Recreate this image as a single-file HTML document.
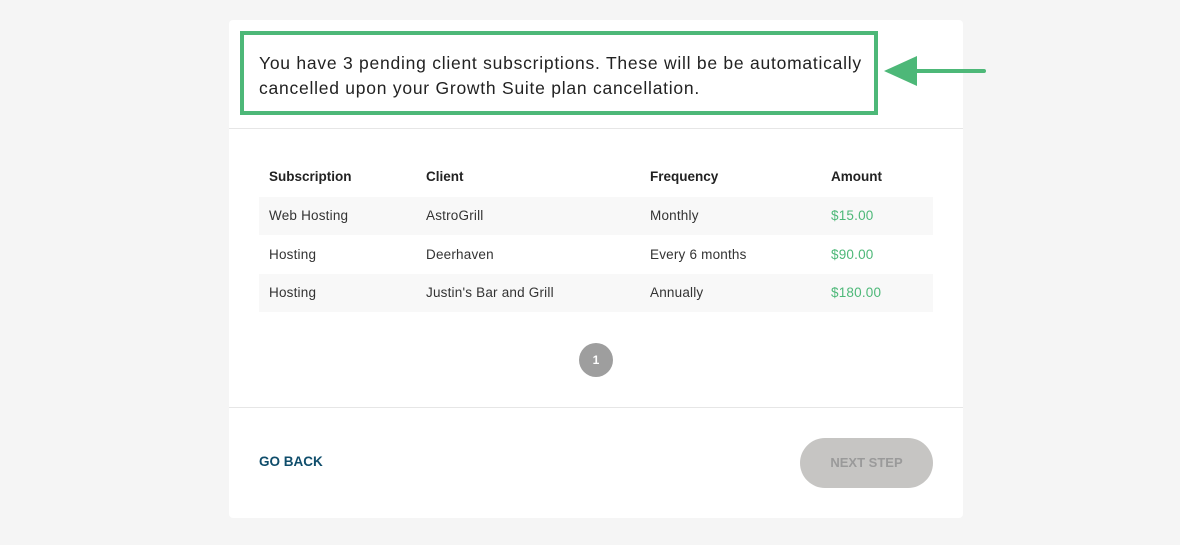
<!DOCTYPE html>
<html><head><style>
*{margin:0;padding:0;box-sizing:border-box}
body{width:1180px;height:545px;background:#f5f5f5;font-family:"Liberation Sans",sans-serif;position:relative;overflow:hidden;color:#333}
.card{position:absolute;left:229px;top:20px;width:734px;height:498px;background:#fff;border-radius:4px}
.box{position:absolute;left:240px;top:31px;width:638px;height:84px;border:4px solid #4db878;padding:16px 15px;font-size:17.5px;letter-spacing:0.75px;line-height:25px;color:#222;white-space:nowrap}
.hr{position:absolute;left:229px;width:734px;height:1px;background:#e6e6e6}
.row{position:absolute;left:259px;width:674px;height:38px;font-size:13.5px;line-height:38px;color:#333;letter-spacing:0.2px}
.row span{position:absolute}
.sh{background:#f8f8f8}
.h{font-weight:bold;color:#222;letter-spacing:0}
.g{color:#4db878}
.pg{position:absolute;left:579px;top:343px;width:34px;height:34px;border-radius:50%;background:#9e9e9e;color:#fff;font-size:12px;font-weight:bold;text-align:center;line-height:34px}
.back{position:absolute;left:259px;top:454px;font-size:13.5px;font-weight:bold;color:#0f4d6b}
.next{position:absolute;left:800px;top:438px;width:133px;height:50px;border-radius:25px;background:#c6c5c3;color:#9a9a9a;font-size:13px;font-weight:bold;text-align:center;line-height:50px}
</style></head><body>
<div class="card"></div>
<div class="box">You have 3 pending client subscriptions. These will be be automatically<br>cancelled upon your Growth Suite plan cancellation.</div>
<svg style="position:absolute;left:880px;top:55px" width="110" height="34"><line x1="30" y1="16" x2="104" y2="16" stroke="#4db878" stroke-width="4" stroke-linecap="round"/><polygon points="4,16 37,1 37,31" fill="#4db878"/></svg>
<div class="hr" style="top:128px"></div>
<div class="row h" style="top:158px"><span style="left:10px">Subscription</span><span style="left:167px">Client</span><span style="left:391px">Frequency</span><span style="left:572px">Amount</span></div>
<div class="row sh" style="top:197px"><span style="left:10px">Web Hosting</span><span style="left:167px">AstroGrill</span><span style="left:391px">Monthly</span><span class="g" style="left:572px">$15.00</span></div>
<div class="row" style="top:236px"><span style="left:10px">Hosting</span><span style="left:167px">Deerhaven</span><span style="left:391px">Every 6 months</span><span class="g" style="left:572px">$90.00</span></div>
<div class="row sh" style="top:274px"><span style="left:10px">Hosting</span><span style="left:167px">Justin's Bar and Grill</span><span style="left:391px">Annually</span><span class="g" style="left:572px">$180.00</span></div>
<div class="pg">1</div>
<div class="hr" style="top:407px"></div>
<div class="back">GO BACK</div>
<div class="next">NEXT STEP</div>
</body></html>
